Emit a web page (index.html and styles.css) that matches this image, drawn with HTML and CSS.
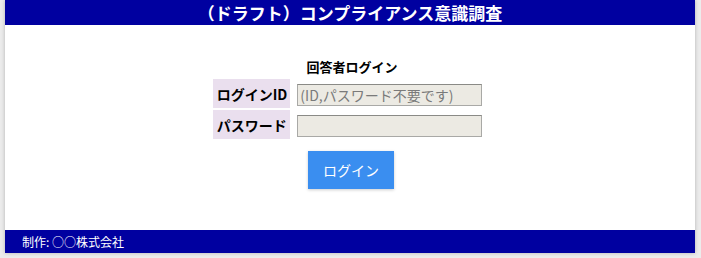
FILE: index.html
```html
<!DOCTYPE html>
<html lang="ja">
<head>
<meta charset="utf-8">
<link rel="stylesheet" href="styles.css">
</head>
<body>
<div class="page">
  <header class="hdr">（ドラフト）コンプライアンス意識調査</header>
  <main class="main">
    <h2 class="title">回答者ログイン</h2>
    <table class="form">
      <tr>
        <th>ログインID</th>
        <td><input class="inp" type="text" placeholder="(ID,パスワード不要です)"></td>
      </tr>
      <tr>
        <th>パスワード</th>
        <td><input class="inp" type="password"></td>
      </tr>
    </table>
    <button class="btn">ログイン</button>
  </main>
  <footer class="ftr">制作: ○○株式会社</footer>
</div>
</body>
</html>
```
FILE: styles.css
```css
html, body { margin: 0; padding: 0; }
body {
  background: #ececec;
  font-family: "Noto Sans CJK JP", "Noto Sans", sans-serif;
  height: 258px;
}
.page {
  width: 690px;
  margin: 0 0 0 5px;
  background: #fff;
  box-shadow: 0 0 4px rgba(0,0,0,0.25);
  display: flex;
  flex-direction: column;
}
.hdr {
  background: #0000a0;
  color: #fff;
  font-weight: bold;
  font-size: 17px;
  height: 25px;
  line-height: 25px;
  text-align: center;
}
.main {
  height: 205px;
  display: flex;
  flex-direction: column;
  align-items: center;
}
.title {
  margin: 33px 0 0 4px;
  font-size: 13px;
  line-height: 18px;
  font-weight: bold;
}
.form {
  border-spacing: 2px;
  margin: 1px 5px 0 0;
}
.form th {
  background: #eadfee;
  font-size: 14px;
  font-weight: bold;
  text-align: left;
  padding: 0 3px 0 4px;
  height: 29px;
}
.form td { padding: 0 0 0 5px; }
.inp {
  width: 185px;
  height: 22px;
  box-sizing: border-box;
  background: #eceae3;
  border: 1px solid #a9a9a6;
  border-top-color: #8a8a86;
  font-family: inherit;
  font-size: 14px;
  padding: 0 2px;
}
.inp::placeholder { color: #7a7a7a; }
.btn {
  margin: 10px 0 0 2px;
  width: 86px;
  height: 38px;
  background: #3a8ef0;
  color: #fff;
  border: none;
  font-family: inherit;
  font-size: 14px;
  box-shadow: 0 1px 3px rgba(0,0,0,0.2);
}
.ftr {
  background: #0000a0;
  color: #fff;
  font-size: 12px;
  height: 23px;
  line-height: 23px;
  padding-left: 17px;
}
```
